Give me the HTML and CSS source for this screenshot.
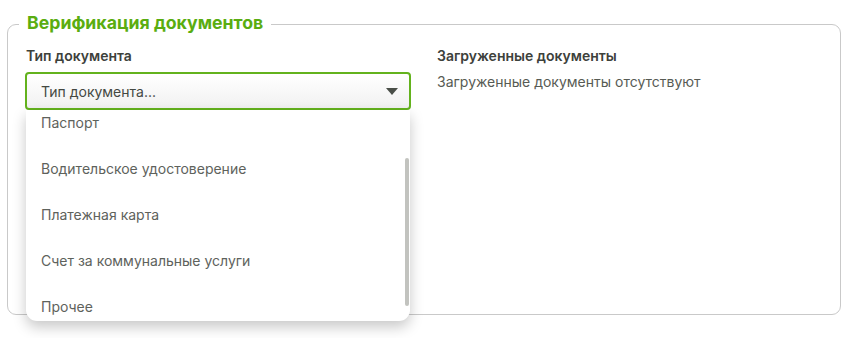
FILE: index.html
```html
<!DOCTYPE html>
<html lang="ru">
<head>
    <meta charset="UTF-8">
    <meta name="viewport" content="width=device-width, initial-scale=1.0">
    <title>Верификация документов</title>
    <link rel="stylesheet" href="styles.css">
</head>
<body>

    <div class="verify">
        <div class="legend">Верификация документов</div>
        <div class="columns">
            <div class="col col-left">
                <div class="label">Тип документа</div>
                <div class="select-wrap">
                    <div class="select">
                        <span>Тип документа...</span>
                        <svg class="arrow" width="12" height="7" viewBox="0 0 12 7"><path d="M0 0H12L6 7Z" fill="#4a4f48"/></svg>
                    </div>
                    <div class="dropdown">
                        <ul class="options">
                            <li>Паспорт</li>
                            <li>Водительское удостоверение</li>
                            <li>Платежная карта</li>
                            <li>Счет за коммунальные услуги</li>
                            <li>Прочее</li>
                        </ul>
                        <div class="scrollbar"></div>
                    </div>
                </div>
            </div>
            <div class="col col-right">
                <div class="label">Загруженные документы</div>
                <div class="empty">Загруженные документы отсутствуют</div>
            </div>
        </div>
    </div>

</body>
</html>
```

FILE: styles.css
```css
html, body {
    min-height: 100%;
}
body {
    margin: 0;
    min-height: 338px;
    background-color: #ffffff;
    font-family: Inter, "Noto Sans", sans-serif;
    color: #3e423c;
}
.verify {
    position: relative;
    box-sizing: border-box;
    margin: 24px 0 0 7px;
    width: 834px;
    height: 291px;
    padding: 21px 17px 0 17px;
    border: 1px solid #c9c9c9;
    border-radius: 9px;
}
.legend {
    position: absolute;
    top: -13px;
    left: 11px;
    padding: 0 8px;
    background-color: #ffffff;
    font-size: 17.7px;
    font-weight: 700;
    color: #5aad10;
    line-height: 22px;
}
.columns {
    display: flex;
    gap: 25px;
}
.col-left {
    width: 386px;
}
.col-right {
    flex: 1;
}
.label {
    padding-left: 1px;
    font-size: 14px;
    font-weight: 600;
    color: #3d413b;
    line-height: 20px;
    margin-bottom: 6px;
}
.empty {
    padding-left: 1px;
    font-size: 14px;
    color: #575b54;
    line-height: 20px;
}
.select-wrap {
    position: relative;
}
.select {
    display: flex;
    align-items: center;
    justify-content: space-between;
    height: 34px;
    padding: 0 11px 0 14px;
    border: 2px solid #63b21d;
    border-radius: 4px;
    background: linear-gradient(#ffffff, #f1f1f1);
    font-size: 14px;
    color: #444842;
}
.dropdown {
    position: absolute;
    left: 1px;
    right: 1px;
    top: 38px;
    height: 211px;
    overflow: hidden;
    background-color: #ffffff;
    border-radius: 0 0 11px 11px;
    box-shadow: 0 6px 14px rgba(0, 0, 0, 0.22);
}
.options {
    list-style: none;
    margin: -10px 0 0 0;
    padding: 0;
}
.options li {
    height: 46px;
    line-height: 46px;
    padding-left: 15px;
    font-size: 14px;
    color: #5e625c;
}
.scrollbar {
    position: absolute;
    right: 1px;
    top: 48px;
    width: 4px;
    height: 148px;
    border-radius: 2px;
    background-color: #c2c3bf;
}
```
